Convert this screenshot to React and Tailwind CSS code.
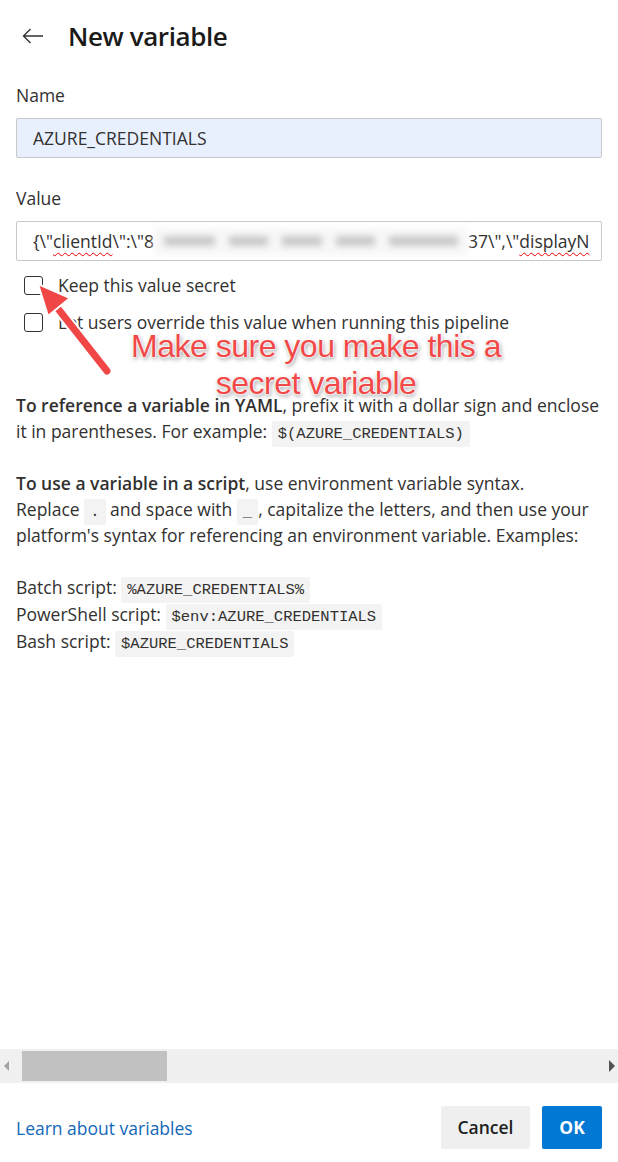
import React from "react";

function Code({ children }) {
  return (
    <code className="rounded-[2px] bg-[#f3f3f3] px-[6px] py-[4px] font-['Liberation_Mono',monospace] text-[15.5px] leading-none text-[#323130]">
      {children}
    </code>
  );
}

function Checkbox({ label }) {
  return (
    <label className="flex h-[24px] items-center gap-[15px] pl-[8px]">
      <span className="block h-[19px] w-[19px] shrink-0 rounded-[3px] border border-[#333]" />
      <span className="text-[17.5px] leading-[24px] text-[#323130]">{label}</span>
    </label>
  );
}

function Annotation() {
  return (
    <div className="pointer-events-none absolute left-0 top-[270px] h-[140px] w-full">
      <svg width="130" height="120" viewBox="0 0 130 120" className="absolute left-0 top-0">
        <line x1="48" y1="26" x2="107" y2="101" stroke="#fff" strokeWidth="11" strokeLinecap="round" />
        <line x1="48" y1="26" x2="107" y2="101" stroke="#f04646" strokeWidth="7" strokeLinecap="round" />
        <polygon points="38,14 70,28 48,46" fill="#f04646" stroke="#fff" strokeWidth="2" strokeLinejoin="round" />
      </svg>
      <div className="absolute left-0 top-[58px] w-full pl-[14px] text-center font-['Liberation_Sans',Arial,sans-serif] text-[32px] leading-[37px] tracking-[-0.5px] text-[#f24848] [text-shadow:0_0_2px_#fff,0_0_2px_#fff,0_0_3px_#fff,1px_2px_4px_rgba(0,0,0,0.5)]">
        <p>Make sure you make this a</p>
        <p>secret variable</p>
      </div>
    </div>
  );
}

export default function App() {
  return (
    <div className="relative flex h-[1162px] w-[618px] flex-col bg-white font-['Open_Sans',sans-serif] text-[#323130]">
      <div className="flex items-center gap-[24px] px-[22px] pt-[19px]">
        <svg width="22" height="16" viewBox="0 0 22 16" fill="none" stroke="#333" strokeWidth="1.4">
          <path d="M21 8H1.5M8.5 1L1.5 8l7 7" />
        </svg>
        <h1 className="text-[26px] font-semibold leading-[34px] tracking-[-0.4px] text-[#1b1a19]">New variable</h1>
      </div>

      <div className="px-4 pt-[30px]">
        <p className="text-[17.5px] leading-[24px]">Name</p>
        <div className="mt-[11px] flex h-[40px] items-center rounded-[2px] border border-[#c8c8c8] bg-[#e8f0fe] px-[16px] text-[17.5px]">
          AZURE_CREDENTIALS
        </div>

        <p className="mt-[28px] text-[17.5px] leading-[24px]">Value</p>
        <div className="mt-[11px] flex h-[40px] items-center overflow-hidden whitespace-nowrap rounded-[2px] border border-[#c8c8c8] bg-white pl-[16px] text-[17.5px]">
          <span>{"{\\\""}</span>
          <span className="underline decoration-[#e00] decoration-wavy decoration-1 underline-offset-[4px]">clientId</span>
          <span>{"\\\":\\\"8"}</span>
          <span className="flex h-[27px] w-[314px] shrink-0 items-center gap-[14px] bg-[#f7f7f7] px-[10px] blur-[3px]">
            <span className="h-[10px] w-[52px] bg-[#cacaca]" />
            <span className="h-[10px] w-[40px] bg-[#cacaca]" />
            <span className="h-[10px] w-[40px] bg-[#cacaca]" />
            <span className="h-[10px] w-[40px] bg-[#cacaca]" />
            <span className="h-[10px] w-[70px] bg-[#cacaca]" />
          </span>
          <span>{"37\\\",\\\""}</span>
          <span className="underline decoration-[#e00] decoration-wavy decoration-1 underline-offset-[4px]">displayN</span>
        </div>

        <div className="mt-[12px] flex flex-col gap-[13px]">
          <Checkbox label="Keep this value secret" />
          <Checkbox label="Let users override this value when running this pipeline" />
        </div>

        <div className="mt-[58px] text-[17.5px] leading-[26px]">
          <p>
            <b className="font-semibold">To reference a variable in YAML</b>, prefix it with a dollar sign and enclose
            <br />
            it in parentheses. For example: <Code>$(AZURE_CREDENTIALS)</Code>
          </p>
          <p className="mt-[26px]">
            <b className="font-semibold">To use a variable in a script</b>, use environment variable syntax.
            <br />
            Replace <Code>.</Code> and space with <Code>_</Code>, capitalize the letters, and then use your
            <br />
            platform's syntax for referencing an environment variable. Examples:
          </p>
          <div className="mt-[26px] flex flex-col leading-[27px]">
            <p>
              Batch script: <Code>%AZURE_CREDENTIALS%</Code>
            </p>
            <p>
              PowerShell script: <Code>$env:AZURE_CREDENTIALS</Code>
            </p>
            <p>
              Bash script: <Code>$AZURE_CREDENTIALS</Code>
            </p>
          </div>
        </div>
      </div>

      <div className="mt-auto flex h-[34px] items-center bg-[#f0f0f0]">
        <svg width="22" height="34" viewBox="0 0 22 34" className="shrink-0">
          <polygon points="9,12 4,17 9,22" fill="#a3a3a3" />
        </svg>
        <div className="h-[30px] w-[145px] bg-[#c1c1c1]" />
        <div className="flex-1" />
        <svg width="14" height="34" viewBox="0 0 14 34" className="shrink-0">
          <polygon points="5,11 11,17 5,23" fill="#505050" />
        </svg>
      </div>

      <div className="flex h-[79px] items-start justify-between px-4 pt-[23px]">
        <a className="mt-[9px] text-[17.5px] leading-[26px] text-[#1368b8]">Learn about variables</a>
        <div className="flex gap-[12px]">
          <button className="h-[43px] w-[89px] rounded-[2px] bg-[#efefef] text-[17.5px] font-semibold text-[#201f1e]">
            Cancel
          </button>
          <button className="h-[43px] w-[60px] rounded-[2px] bg-[#0078d4] text-[17.5px] font-bold text-white">OK</button>
        </div>
      </div>

      <Annotation />
    </div>
  );
}
